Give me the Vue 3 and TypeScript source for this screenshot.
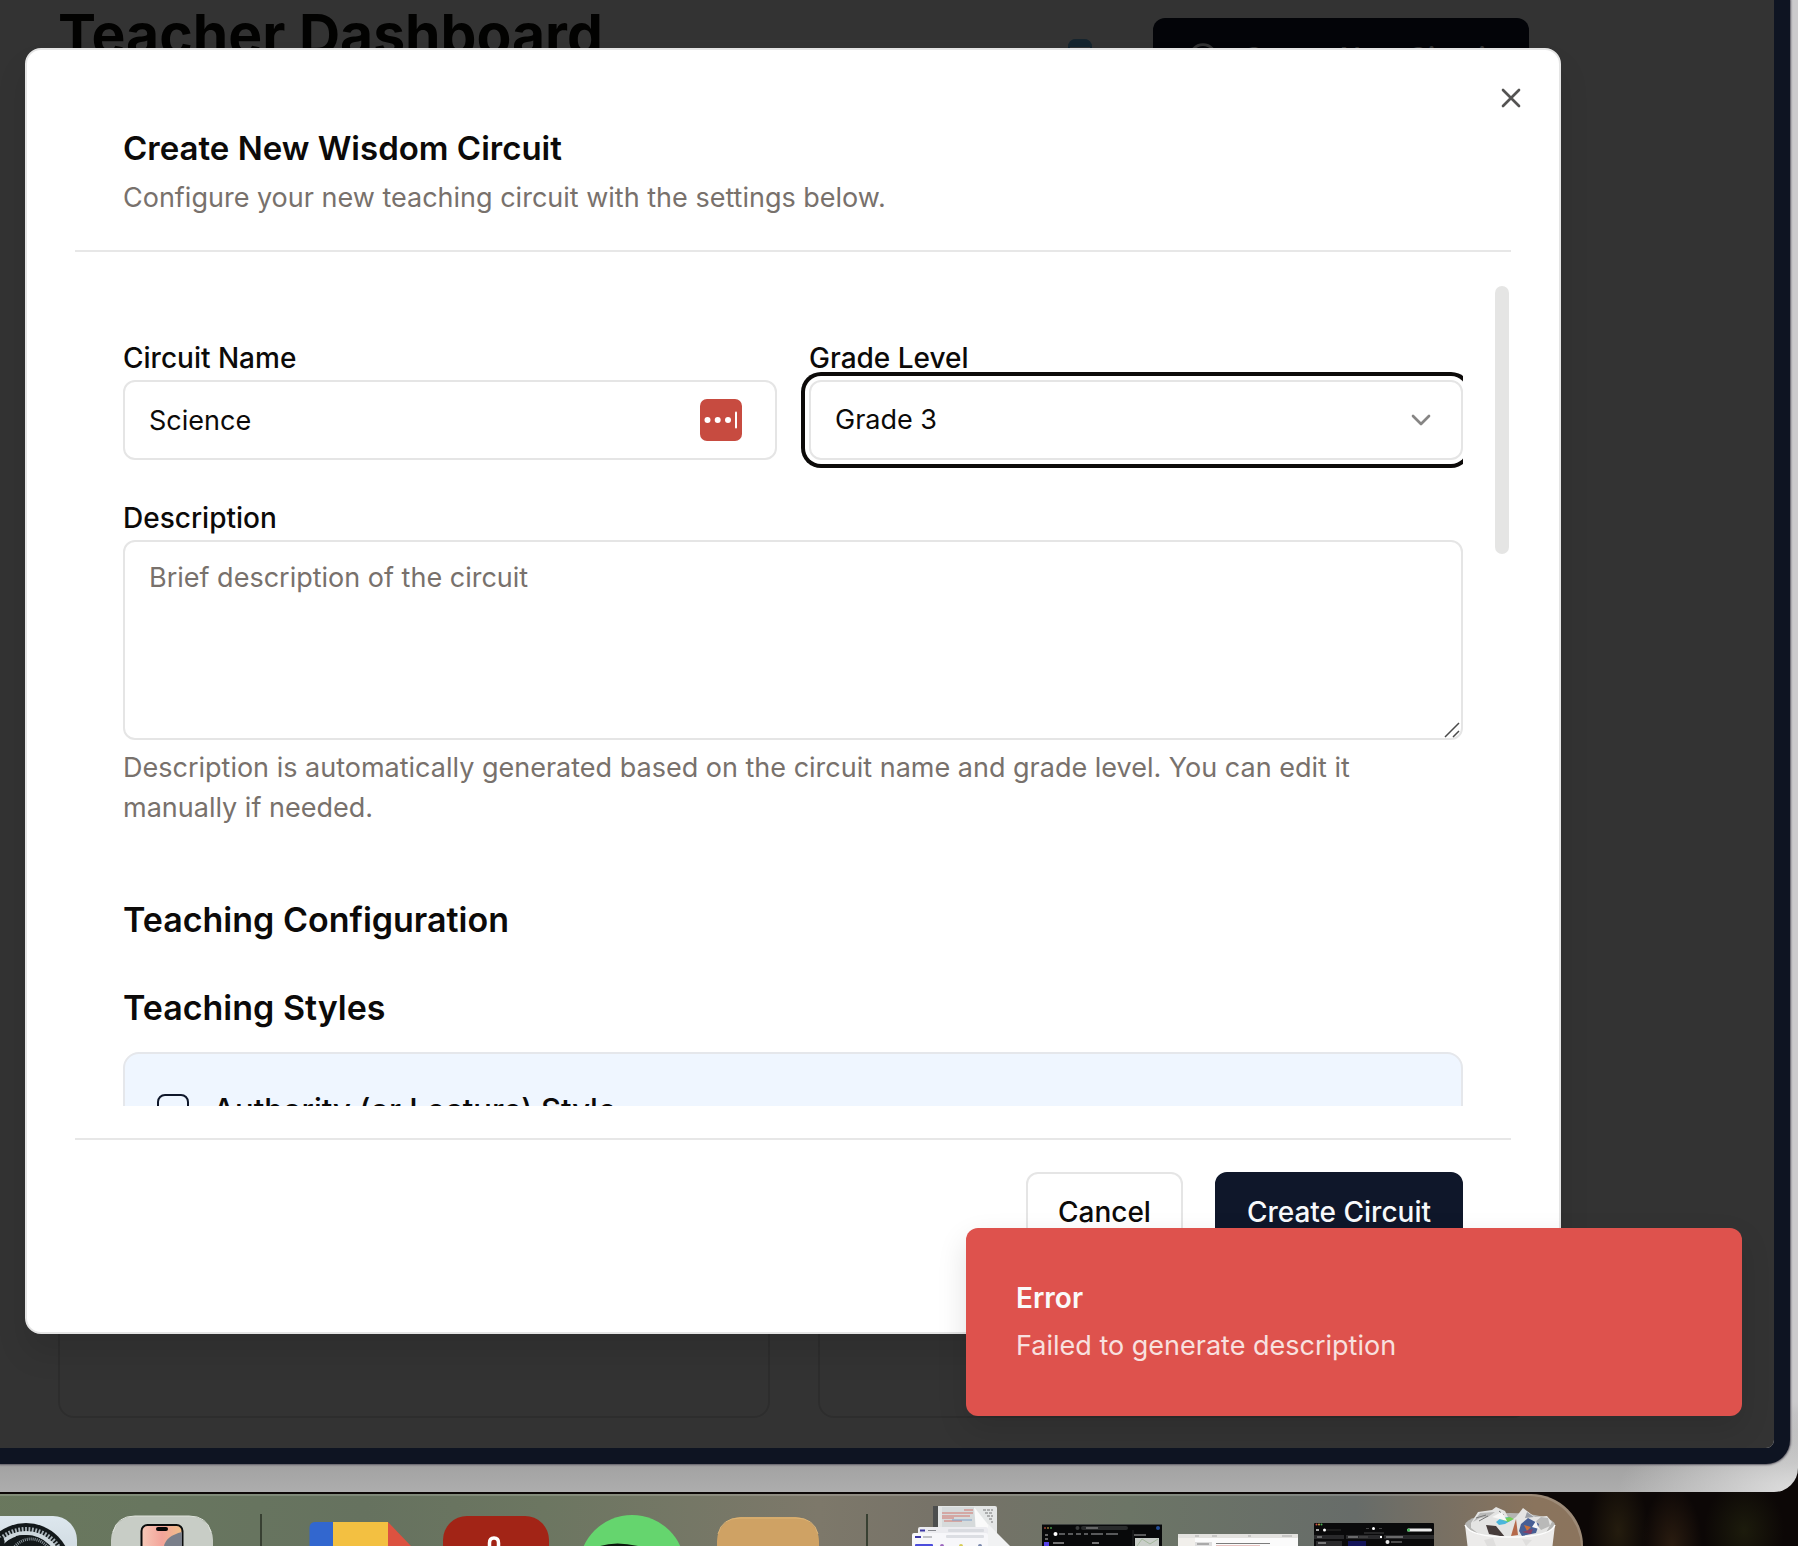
<script setup lang="ts">
import { ref } from 'vue'

const circuitName = ref('Science')
const gradeLevel = ref('Grade 3')
const description = ref('')
const authorityStyle = ref(false)
const grades: string[] = ['Grade 1', 'Grade 2', 'Grade 3', 'Grade 4', 'Grade 5']
const gearTeeth: number[] = Array.from({ length: 72 }, (_, i) => i * 5)
</script>

<template>
  <div class="desktop">
    <div class="window">
      <div class="frame">
        <div class="viewport">
          <main class="dashboard">
            <header class="dash-head">
              <h1>Teacher Dashboard</h1>
              <div class="dash-actions">
                <svg class="blue-icon" width="26" height="40" viewBox="0 0 26 40" aria-hidden="true">
                  <rect x="2" y="2" width="22" height="36" rx="7" fill="#f4f4f4" stroke="#5fb4e8" stroke-width="2" />
                  <path d="M1 9a8 8 0 0 1 8-8h8a8 8 0 0 1 8 8z" fill="#70b4e0" />
                </svg>
                <button class="dash-new" type="button">
                  <svg width="32" height="32" viewBox="0 0 24 24" fill="none" stroke="currentColor" stroke-width="2" stroke-linecap="round" aria-hidden="true">
                    <circle cx="12" cy="12" r="10" /><path d="M8 12h8M12 8v8" />
                  </svg>
                  Create New Circuit
                </button>
              </div>
            </header>
            <div class="dash-cards"><div class="dash-card"></div><div class="dash-card"></div></div>
          </main>

          <div class="overlay"></div>

          <section class="modal" role="dialog" aria-labelledby="modal-title">
            <button class="close" type="button" aria-label="Close">
              <svg width="32" height="32" viewBox="0 0 24 24" fill="none" stroke="currentColor" stroke-width="2" stroke-linecap="round" aria-hidden="true">
                <path d="M18 6 6 18M6 6l12 12" />
              </svg>
            </button>

            <header class="modal-head">
              <h2 id="modal-title">Create New Wisdom Circuit</h2>
              <p>Configure your new teaching circuit with the settings below.</p>
            </header>

            <div class="scroll-area">
              <form id="circuit-form" class="form" @submit.prevent>
                <div class="two-col">
                  <div class="field">
                    <label for="circuit-name">Circuit Name</label>
                    <div class="control">
                      <input id="circuit-name" v-model="circuitName" type="text" />
                      <svg class="password-icon" width="42" height="42" viewBox="0 0 42 42" aria-hidden="true">
                        <rect width="42" height="42" rx="7" fill="#c74b40" />
                        <g fill="#fff">
                          <circle cx="7.5" cy="21" r="3" /><circle cx="17.7" cy="21" r="3" /><circle cx="28" cy="21" r="3" />
                          <rect x="35" y="12.500" width="2" height="17" rx="1" />
                        </g>
                      </svg>
                    </div>
                  </div>
                  <div class="field">
                    <label for="grade-level">Grade Level</label>
                    <div class="control">
                      <select id="grade-level" v-model="gradeLevel">
                        <option v-for="g in grades" :key="g">{{ g }}</option>
                      </select>
                      <svg class="chevron" width="32" height="32" viewBox="0 0 24 24" fill="none" stroke="currentColor" stroke-width="2" stroke-linecap="round" stroke-linejoin="round" aria-hidden="true">
                        <path d="m6 9 6 6 6-6" />
                      </svg>
                    </div>
                  </div>
                </div>

                <div class="field">
                  <label for="description">Description</label>
                  <div class="control">
                    <textarea id="description" v-model="description" placeholder="Brief description of the circuit"></textarea>
                    <svg class="grip" width="16" height="16" viewBox="0 0 16 16" fill="none" stroke="#4a4a4a" stroke-width="1.500" aria-hidden="true">
                      <path d="M1 15 15 1M9 15l6-6" />
                    </svg>
                  </div>
                  <p class="help">Description is automatically generated based on the circuit name and grade level. You can edit it manually if needed.</p>
                </div>

                <div class="teaching">
                  <h3>Teaching Configuration</h3>
                  <div class="styles">
                    <h3>Teaching Styles</h3>
                    <div class="style-card">
                      <input id="authority" v-model="authorityStyle" type="checkbox" />
                      <label for="authority">Authority (or Lecture) Style</label>
                    </div>
                  </div>
                </div>
              </form>
              <div class="thumb"></div>
            </div>

            <footer class="modal-foot">
              <button class="btn" type="button">Cancel</button>
              <button class="btn primary" type="submit" form="circuit-form">Create Circuit</button>
            </footer>
          </section>

          <div class="toast" role="alert">
            <strong>Error</strong>
            <p>Failed to generate description</p>
          </div>
        </div>
      </div>
    </div>

    <div class="dock-strip">
      <div class="dock">
        <!-- Settings -->
        <svg class="slot" viewBox="0 0 136 52" aria-hidden="true">
          <defs>
            <linearGradient id="set" x1="0" y1="0" x2="0" y2="1"><stop offset="0" stop-color="#dde7ee" /><stop offset="1" stop-color="#b9c4ca" /></linearGradient>
          </defs>
          <rect x="17" y="22" width="102" height="102" rx="24" fill="url(#set)" />
          <circle cx="68" cy="74" r="45" fill="#12181a" />
          <g stroke="#a9b4ba" stroke-width="1.800">
            <path v-for="a in gearTeeth" :key="a" d="M68 33v7" :transform="`rotate(${a} 68 74)`" />
          </g>
          <circle cx="68" cy="74" r="35" fill="none" stroke="#cdd7dc" stroke-width="4" />
          <path d="M58 42q20-4 32 10H62q-7-5-4-10z" fill="#12181a" />
          <circle cx="73" cy="66" r="21" fill="none" stroke="#89949a" stroke-width="3" stroke-dasharray="1 1" />
          <path d="M33 52l10-9q6 3 2 9z" fill="#12181a" />
        </svg>
        <!-- Phone mirroring -->
        <svg class="slot" viewBox="0 0 136 52" aria-hidden="true">
          <defs>
            <linearGradient id="ph" x1="0" y1="0" x2="1" y2="0"><stop offset="0" stop-color="#f6c9b8" /><stop offset="0.500" stop-color="#f3a49a" /><stop offset="1" stop-color="#f0c088" /></linearGradient>
          </defs>
          <rect x="17" y="22" width="102" height="102" rx="24" fill="#c8cdc6" />
          <path d="M19 38q4-16 22-16h54q18 0 22 16" fill="none" stroke="#dfe3dc" />
          <rect x="47.500" y="31" width="41" height="80" rx="6" fill="url(#ph)" stroke="#0b0d0d" stroke-width="2" />
          <path d="M88 38Q72 42 70 52h18z" fill="#7a7f8a" />
          <rect x="62" y="33" width="12" height="4" rx="2" fill="#070707" />
        </svg>
        <span class="sep"></span>
        <!-- Note -->
        <svg class="slot" viewBox="0 0 136 52" aria-hidden="true">
          <path d="M17.500 52V34q0-6 6-6H42v24z" fill="#3267cf" />
          <path d="M41 28h55v24H41z" fill="#f3c041" />
          <path d="M96 28l23 24H96z" fill="#dc5240" />
        </svg>
        <!-- Red app -->
        <svg class="slot" viewBox="0 0 136 52" aria-hidden="true">
          <rect x="15" y="22" width="106" height="106" rx="24" fill="#a22416" />
          <path d="M61.500 54v-5q0-5 4.500-5t4.500 5v5" fill="none" stroke="#fff" stroke-width="3.500" />
        </svg>
        <!-- Green app -->
        <svg class="slot" viewBox="0 0 136 52" aria-hidden="true">
          <circle cx="68" cy="74" r="53" fill="#65d56e" />
          <path d="M36 52q16-5 38 0z" fill="#0c160d" />
        </svg>
        <!-- Orange app -->
        <svg class="slot" viewBox="0 0 136 52" aria-hidden="true">
          <rect x="17" y="23" width="102" height="102" rx="24" fill="#cfa264" />
          <path d="M18 40q4-16 22-16h56q18 0 22 16" fill="none" stroke="#ddb577" />
        </svg>
        <span class="sep"></span>
        <!-- Documents stack -->
        <svg class="slot" viewBox="0 0 136 52" aria-hidden="true">
          <rect x="35" y="12" width="8" height="24" fill="#4c4e4e" />
          <path d="M40 12h57q2 0 2 2v38H40z" fill="#e4e6e6" />
          <path d="M44 13h33v20H44z" fill="#d6dadb" />
          <path d="M66 16h9M44 19h31M44 22h28M44 24h12M46 27h18" stroke="#d2746c" />
          <path d="M54 26h20" stroke="#7d9fc9" />
          <path d="M85 16h10M87 19h8M89 22h6M91 25h4M93 28h2" stroke="#777" stroke-dasharray="3 1" />
          <path d="M76 13l20 25-5 5-13-8z" fill="#fafafa" />
          <path d="M90 30v22h22z" fill="#f1f2f3" />
          <rect x="20" y="33" width="70" height="19" rx="2" fill="#ececf0" />
          <rect x="14" y="39" width="76" height="14" rx="2" fill="#f7f7fa" />
          <rect x="50" y="35" width="36" height="3" rx="1" fill="#d9dbe0" />
          <rect x="48" y="41" width="38" height="3" rx="1" fill="#dcdee3" />
          <path d="M22 36.500h5M17 43h6" stroke="#3a36a5" stroke-width="2" />
          <path d="M30 36.500h8M25 43h9" stroke="#888a90" />
          <rect x="17" y="50" width="18" height="4" rx="1" fill="#4b4cdc" />
          <circle cx="44" cy="52" r="2" fill="#9b66bd" /><circle cx="63" cy="52" r="2" fill="#d6cc56" /><circle cx="82" cy="52" r="2" fill="#7786ab" />
        </svg>
        <!-- Dark browser window -->
        <svg class="slot" viewBox="0 0 136 52" aria-hidden="true">
          <rect x="8" y="30" width="120" height="30" rx="1" fill="#08090a" />
          <path d="M8 30.500h120" stroke="#3e4240" />
          <circle cx="11" cy="34" r="1" fill="#9e4038" /><circle cx="14" cy="34" r="1" fill="#967a33" /><circle cx="17" cy="34" r="1" fill="#3f8f44" />
          <circle cx="43.500" cy="34" r="2" fill="#3b3d3e" />
          <rect x="47" y="32" width="47" height="4" rx="2" fill="#292b2c" />
          <path d="M52 34h12" stroke="#a0a0a0" />
          <circle cx="124" cy="34" r="2" fill="#234d96" />
          <circle cx="21.500" cy="40" r="2" fill="#fff" />
          <path d="M25 40h6M34 40h5M42 40h5M50 40h4M57 40h12M72 40h12" stroke="#58595b" stroke-width="2" />
          <path d="M19 49h11M58 49h7" stroke="#dedede" />
          <path d="M99 36v16" stroke="#252727" /><path d="M100 41h12" stroke="#ababab" />
          <rect x="101" y="44" width="24" height="8" fill="#c9cec9" /><path d="M103 52l5-7 8 5 8-5" stroke="#a4b89c" fill="none" />
          <rect x="10" y="48" width="5" height="4" fill="#5642e9" /><path d="M11 41h3M11 45h3" stroke="#666" stroke-width="2" />
        </svg>
        <!-- Light document window -->
        <svg class="slot" viewBox="0 0 136 52" aria-hidden="true">
          <rect x="8" y="40" width="120" height="14" rx="1" fill="#fbfbfb" />
          <rect x="8" y="40" width="120" height="4" rx="1" fill="#e3e2df" />
          <rect x="8" y="44" width="17" height="8" fill="#f1efeb" />
          <rect x="25" y="48" width="17" height="4" fill="#dedede" />
          <path d="M27 50h12" stroke="#777" /><path d="M46 49.500h54" stroke="#7c7c7c" /><path d="M46 52h44" stroke="#d58a84" />
          <path d="M25 42h4M42 42h5M78 42h3M112 42h10" stroke="#aaa" />
        </svg>
        <!-- Dark music window -->
        <svg class="slot" viewBox="0 0 136 52" aria-hidden="true">
          <rect x="8" y="29" width="120" height="30" rx="1" fill="#0a0a0b" />
          <circle cx="10.500" cy="30.500" r="1" fill="#cf4b41" /><circle cx="13" cy="30.500" r="1" fill="#cda33e" /><circle cx="15.500" cy="30.500" r="1" fill="#49ae50" />
          <path d="M10 36h3" stroke="#aaa" stroke-width="2" /><circle cx="18.500" cy="36" r="1.500" fill="#fff" /><path d="M20 36h15" stroke="#2e2e2e" />
          <circle cx="67.500" cy="34.500" r="1.500" fill="#fff" /><path d="M60 34.500h3M73 34.500h3M58 39h20" stroke="#434344" />
          <rect x="101" y="34.500" width="25" height="3" rx="1.500" fill="#ececec" /><rect x="101" y="34.500" width="3" height="3" rx="1.500" fill="#42b956" />
          <path d="M8 43h30M40 43h36M78 43h50" stroke="#29292b" stroke-width="4" />
          <path d="M11 43h5M42 43h10M80 43h17" stroke="#aaa" /><path d="M53 43h9" stroke="#555" />
          <rect x="10" y="47" width="26" height="5" fill="#2a2a2c" /><path d="M12 49h8" stroke="#c4c4c4" />
          <rect x="42" y="47" width="18" height="5" fill="#14155a" /><circle cx="81.500" cy="48" r="2" fill="#e6e6e6" /><path d="M85 48h11" stroke="#8c8c8c" />
          <rect x="74" y="42" width="2" height="2" fill="#fff" />
        </svg>
        <!-- Bin with paper -->
        <svg class="slot" viewBox="0 0 136 52" aria-hidden="true">
          <ellipse cx="68" cy="31" rx="45" ry="12" fill="#b4b4b2" />
          <path d="M29 29l7-11 14-2 4-3 9 4 5 10 6-4 7-9 12 9 12-1 5 6-8 14-15 5H46L29 34z" fill="#e4e4e3" />
          <path d="M31 28l7-9 15-1-7 5-8 1zM99 23l7 1 2 8-9 4-6-8z" fill="#b9b9b8" />
          <path d="M34 24l10-3M37 27l9-5M57 17l5 4" stroke="#777" />
          <path d="M54 28l5-4 8-1 3 3-7 4-6 1z" fill="#4cb6dc" /><path d="M58 25l10-2 4 2-6 3z" fill="#76d055" />
          <path d="M44 31l10 1 9 11-16-3z" fill="#463c3b" /><path d="M74 25l-5 17 7-1z" fill="#b5694a" />
          <path d="M79 30l7-6 11 6-3 9-14 3-3-5z" fill="#475f95" /><path d="M82 31l7 2-4 4z" fill="#cc7039" /><path d="M85 18l7 5-9 1z" fill="#9a9ea6" /><path d="M80 38l11-3-2 5z" fill="#874066" />
          <path d="M60 18l5 9-15-4zM94 27l3 8-7-2z" fill="#f7f7f6" />
          <path d="M23 31q5 12 45 12t45-12l-3 25H26z" fill="#ecebea" />
          <path d="M23 31q5 12 45 12t45-12" fill="none" stroke="#fdfdfd" stroke-width="1.500" />
          <path d="M42 46l9-2 3 8h-9zM80 45l10 1-6 6z" fill="#dfdedd" />
        </svg>
      </div>
    </div>
  </div>
</template>

<style>
html,
body {
  margin: 0;
}
</style>

<style scoped>
.desktop {
  display: flex;
  flex-direction: column;
  height: 100vh;
  overflow: hidden;
  font-family: Inter, "Liberation Sans", sans-serif;
  font-size: 27px;
  line-height: 40px;
  color: #0c0a09;
  background:
    radial-gradient(ellipse 30px 60px at 93% 100%, #2a1c10, transparent),
    radial-gradient(ellipse 40px 50px at 97% 99%, #1c1b0c, transparent),
    radial-gradient(ellipse 30px 60px at 90% 99%, #241c0e, transparent),
    #0c0706;
}
.desktop * {
  box-sizing: border-box;
}
h1,
h2,
h3,
p {
  margin: 0;
}
button,
input,
select,
textarea {
  font: inherit;
  color: inherit;
}

/* Outer windows */
.window {
  flex: 1;
  min-height: 0;
  display: flex;
  padding: 0 8px 28px 0;
  border-radius: 0 0 24px 0;
  background:
    radial-gradient(ellipse 180px 80px at 100% 100%, #dedede, rgba(200, 200, 200, 0)),
    linear-gradient(to top, #adadad, #a2a2a2 28px, #cbcacc 90px);
}
.frame {
  flex: 1;
  display: flex;
  padding: 0 16px 16px 0;
  border-radius: 0 0 24px 0;
  background: #0e1422;
  box-shadow: 0 0 2px 1px #5d5a63;
}
.viewport {
  position: relative;
  flex: 1;
  overflow: hidden;
  border-radius: 0 0 8px 0;
  background: #fff;
}

/* Dashboard behind the dialog */
.dashboard {
  display: flex;
  flex-direction: column;
  height: 100%;
  padding: 0 245px 30px 58px;
}
.dash-head {
  display: flex;
  justify-content: space-between;
}
.dash-head h1 {
  font-size: 57px;
  line-height: 70px;
  font-weight: 700;
}
.dash-actions {
  display: flex;
  align-items: center;
  gap: 60px;
  padding-top: 18px;
}
.dash-new {
  display: flex;
  align-items: center;
  justify-content: center;
  gap: 24px;
  width: 376px;
  height: 80px;
  border: 0;
  border-radius: 12px;
  background: #0f172a;
  color: #f8fafc;
  font-size: 28px;
  font-weight: 500;
}
.dash-cards {
  flex: 1;
  display: grid;
  grid-template-columns: 1fr 1fr;
  gap: 48px;
  padding-top: 100px;
}
.dash-card {
  border: 2px solid #e0e0e0;
  border-radius: 16px;
}
.overlay {
  position: absolute;
  inset: 0;
  background: rgba(0, 0, 0, 0.8);
}

/* Dialog */
.modal {
  position: absolute;
  inset: 48px 213px 114px 25px;
  display: flex;
  flex-direction: column;
  padding: 48px;
  border: 2px solid #e5e5e5;
  border-radius: 16px;
  background: #fff;
  box-shadow: 0 20px 30px rgba(0, 0, 0, 0.1);
}
.close {
  position: absolute;
  top: 32px;
  right: 32px;
  display: flex;
  padding: 0;
  border: 0;
  background: none;
  color: #545352;
}
.modal-head {
  display: flex;
  flex-direction: column;
  gap: 12px;
  padding: 32px 48px;
  border-bottom: 2px solid #e7e7e7;
}
h2 {
  font-size: 33px;
  line-height: 36px;
  font-weight: 600;
}
.modal-head p,
.help {
  color: #78716c;
}
.help {
  padding-right: 32px;
}
.scroll-area {
  position: relative;
  flex: 1;
  min-height: 0;
  margin: 32px 0;
  padding: 0 48px;
  overflow: hidden;
}
.form {
  display: flex;
  flex-direction: column;
  gap: 44px;
  height: 100%;
  padding-top: 60px;
  overflow: hidden;
}
.two-col {
  display: grid;
  grid-template-columns: 1fr 1fr;
  gap: 32px;
}
.field {
  display: flex;
  flex-direction: column;
  gap: 8px;
}
label {
  font-size: 28px;
  font-weight: 500;
  line-height: 28px;
}
.control {
  position: relative;
  display: flex;
}
.control input,
.control select,
textarea {
  width: 100%;
  height: 80px;
  padding: 0 24px;
  border: 2px solid #e5e5e5;
  border-radius: 12px;
  background: #fff;
  outline: none;
}
.control select {
  appearance: none;
  box-shadow: 0 0 0 4px #fff, 0 0 0 8px #0c0a09;
}
textarea {
  display: block;
  height: 200px;
  padding: 16px 24px;
  resize: none;
}
textarea::placeholder {
  color: #78716c;
  opacity: 1;
}
.password-icon {
  position: absolute;
  top: 19px;
  right: 35px;
}
.chevron {
  position: absolute;
  top: 24px;
  right: 26px;
  color: #868584;
}
.grip {
  position: absolute;
  right: 3px;
  bottom: 2px;
}
.teaching {
  display: flex;
  flex-direction: column;
  gap: 32px;
  padding-top: 20px;
}
.styles {
  display: flex;
  flex-direction: column;
  gap: 16px;
}
h3 {
  font-size: 34px;
  line-height: 56px;
  font-weight: 600;
}
.style-card {
  display: flex;
  align-items: center;
  gap: 24px;
  height: 112px;
  padding: 4px 32px 0;
  border: 2px solid #e5e7eb;
  border-radius: 16px;
  background: #eff6ff;
}
.style-card input {
  appearance: none;
  width: 32px;
  height: 32px;
  margin: 0;
  border: 2px solid #0f172a;
  border-radius: 8px;
}
.style-card label {
  font-size: 31px;
}
.thumb {
  position: absolute;
  top: 2px;
  right: 2px;
  width: 14px;
  height: 268px;
  border-radius: 7px;
  background: #e5e5e4;
}
.modal-foot {
  display: flex;
  justify-content: flex-end;
  gap: 32px;
  padding: 32px 48px;
  border-top: 2px solid #e7e7e7;
}
.btn {
  height: 80px;
  padding: 0 30px;
  border: 2px solid #e5e5e5;
  border-radius: 12px;
  background: #fff;
  font-size: 28px;
  font-weight: 500;
}
.btn.primary {
  border-color: #0f172a;
  background: #0f172a;
  color: #f8fafc;
}

/* Toast */
.toast {
  position: absolute;
  right: 32px;
  bottom: 32px;
  display: flex;
  flex-direction: column;
  justify-content: center;
  gap: 8px;
  width: 776px;
  height: 188px;
  padding: 0 50px;
  border-radius: 12px;
  background: #de524d;
  color: #fafafa;
  box-shadow: 0 12px 30px rgba(0, 0, 0, 0.12);
}
.toast strong {
  font-size: 28px;
  font-weight: 600;
}
.toast p {
  color: #f8e0df;
}

/* Dock */
.dock-strip {
  height: 54px;
  padding-top: 2px;
  overflow: hidden;
}
.dock {
  display: flex;
  width: max-content;
  height: 120px;
  margin-left: -42px;
  padding-right: 5px;
  border-radius: 0 52px 0 0;
  background: linear-gradient(90deg, #6a785d 0%, #68765f 12%, #66725f 25%, #6c7661 36%, #7d786a 53%, #767268 61%, #6c7566 72%, #676c69 86%, #8a745d 97%, #8b745d);
  box-shadow: inset -2px 2px 0 rgba(255, 255, 255, 0.16);
}
.slot {
  flex: none;
  width: 136px;
  height: 52px;
}
.sep {
  width: 2px;
  height: 32px;
  margin: 20px 30px 0;
  background: #384032;
}
</style>
